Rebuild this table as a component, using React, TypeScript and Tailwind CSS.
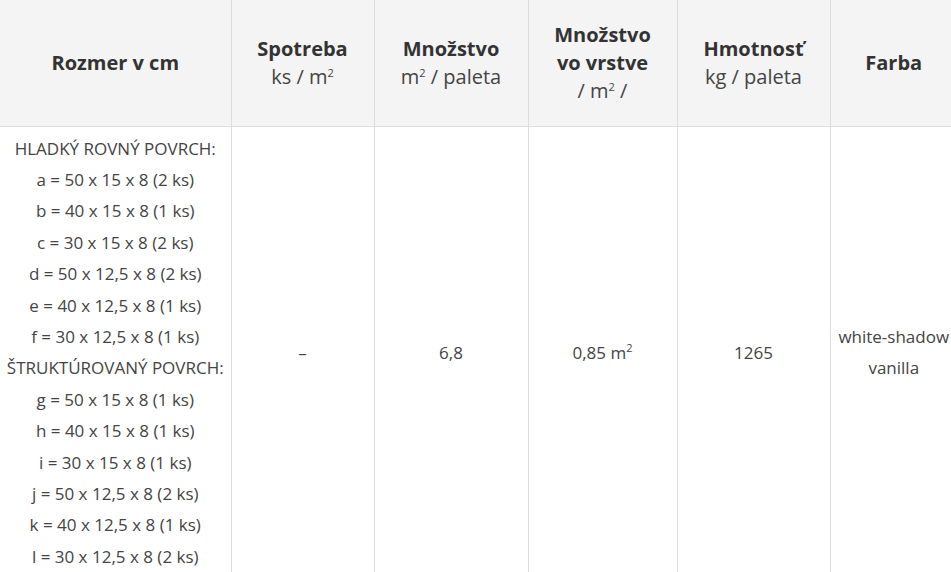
const sizes = [
  'HLADKÝ ROVNÝ POVRCH:',
  'a = 50 x 15 x 8 (2 ks)',
  'b = 40 x 15 x 8 (1 ks)',
  'c = 30 x 15 x 8 (2 ks)',
  'd = 50 x 12,5 x 8 (2 ks)',
  'e = 40 x 12,5 x 8 (1 ks)',
  'f = 30 x 12,5 x 8 (1 ks)',
  'ŠTRUKTÚROVANÝ POVRCH:',
  'g = 50 x 15 x 8 (1 ks)',
  'h = 40 x 15 x 8 (1 ks)',
  'i = 30 x 15 x 8 (1 ks)',
  'j = 50 x 12,5 x 8 (2 ks)',
  'k = 40 x 12,5 x 8 (1 ks)',
  'l = 30 x 12,5 x 8 (2 ks)',
];

const Sup = () => <sup className="text-[11px] relative -top-[7px] align-baseline">2</sup>;

export default function App() {
  return (
    <div className="w-[951px] h-[572px] overflow-hidden bg-white font-['Open_Sans',sans-serif]">
      <table className="table-fixed border-collapse w-[957px]">
        <colgroup>
          <col className="w-[231px]" />
          <col className="w-[143px]" />
          <col className="w-[154px]" />
          <col className="w-[149px]" />
          <col className="w-[153px]" />
          <col className="w-[127px]" />
        </colgroup>
        <thead>
          <tr className="h-[126px] bg-[#f4f4f4] text-[20px] leading-[28px] text-[#333] border-b border-[#dcdcdc]">
            <th className="font-bold align-middle">Rozmer v cm</th>
            <th className="border-l border-[#dcdcdc] align-middle">
              <div className="font-bold">Spotreba</div>
              <div className="font-normal text-[#444]">ks / m<Sup /></div>
            </th>
            <th className="border-l border-[#dcdcdc] align-middle">
              <div className="font-bold">Množstvo</div>
              <div className="font-normal text-[#444]">m<Sup /> / paleta</div>
            </th>
            <th className="border-l border-[#dcdcdc] align-middle">
              <div className="font-bold">Množstvo</div>
              <div className="font-bold">vo vrstve</div>
              <div className="font-normal text-[#444]">/ m<Sup /> /</div>
            </th>
            <th className="border-l border-[#dcdcdc] align-middle">
              <div className="font-bold">Hmotnosť</div>
              <div className="font-normal text-[#444]">kg / paleta</div>
            </th>
            <th className="border-l border-[#dcdcdc] align-middle font-bold">Farba</th>
          </tr>
        </thead>
        <tbody className="text-[17px] leading-[31.4px] text-[#444] text-center">
          <tr>
            <td className="py-[6px] align-middle">
              {sizes.map((s) => (
                <div key={s}>{s}</div>
              ))}
            </td>
            <td className="border-l border-[#dcdcdc] align-middle">–</td>
            <td className="border-l border-[#dcdcdc] align-middle">6,8</td>
            <td className="border-l border-[#dcdcdc] align-middle">0,85 m<Sup /></td>
            <td className="border-l border-[#dcdcdc] align-middle">1265</td>
            <td className="border-l border-[#dcdcdc] align-middle">
              <div>white-shadow</div>
              <div>vanilla</div>
            </td>
          </tr>
        </tbody>
      </table>
    </div>
  );
}
